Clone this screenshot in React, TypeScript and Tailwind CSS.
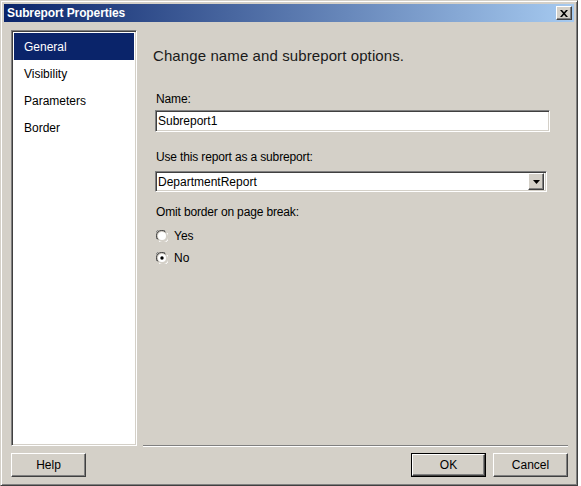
import React from "react";

const raised =
  "border border-t-white border-l-white border-b-[#404040] border-r-[#404040] shadow-[inset_-1px_-1px_0_#808080,inset_1px_1px_0_#d4d0c8]";
const sunken =
  "border border-t-[#808080] border-l-[#808080] border-b-white border-r-white shadow-[inset_1px_1px_0_#404040,inset_-1px_-1px_0_#d4d0c8]";

function Radio({ checked, label }: { checked?: boolean; label: string }) {
  return (
    <div className="flex items-center h-[16px]">
      <svg width="12" height="12" viewBox="0 0 12 12" className="ml-[1px]">
        <path d="M1 9 A5.5 5.5 0 0 1 9 1" fill="none" stroke="#808080" strokeWidth="1" />
        <path d="M2 9.5 A4.5 4.5 0 0 1 9.5 2" fill="none" stroke="#404040" strokeWidth="1" />
        <path d="M3 11 A5.5 5.5 0 0 0 11 3" fill="none" stroke="#ffffff" strokeWidth="1" />
        <circle cx="6" cy="6" r="4" fill="#ffffff" />
        {checked && <circle cx="6" cy="6" r="1.7" fill="#000" />}
      </svg>
      <span className="ml-[6px]">{label}</span>
    </div>
  );
}

export default function App() {
  const ui = { fontFamily: '"Liberation Sans", Arial, sans-serif' };
  return (
    <div className="w-[581px] h-[486px] bg-white relative overflow-hidden" style={ui}>
      <div className="w-[578px] h-[486px] bg-[#d4d0c8] border border-t-[#d4d0c8] border-l-[#d4d0c8] border-b-[#404040] border-r-[#404040] shadow-[inset_1px_1px_0_#ffffff,inset_-1px_-1px_0_#808080] p-[3px] flex flex-col">
        {/* Title bar */}
        <div className="h-[18px] flex items-center bg-[linear-gradient(to_right,#0a246a,#a6caf0)] pl-[3px] pr-[2px]">
          <span className="text-white font-bold text-[12px] leading-none tracking-[-0.1px]">Subreport Properties</span>
          <div className={`ml-auto w-[16px] h-[14px] bg-[#d4d0c8] flex items-center justify-center ${raised}`}>
            <svg width="8" height="7" viewBox="0 0 8 7">
              <path d="M0 0h2l2 2.2L6 0h2L5 3.5 8 7H6L4 4.8 2 7H0l3-3.5z" fill="#000" />
            </svg>
          </div>
        </div>

        {/* Content */}
        <div className="flex mt-[8px] ml-[7px] h-[416px]">
          <div className={`w-[126px] h-[416px] bg-white ${sunken} p-[2px] text-[12px]`}>
            <div className="h-[27px] bg-[#0a246a] text-white flex items-center pl-[10px]">General</div>
            <div className="h-[27px] flex items-center pl-[10px] text-[#000]">Visibility</div>
            <div className="h-[27px] flex items-center pl-[10px] text-[#000]">Parameters</div>
            <div className="h-[27px] flex items-center pl-[10px] text-[#000]">Border</div>
          </div>
          <div className="ml-[6px] w-[425px] h-[416px] border-b border-b-[#808080] shadow-[0_1px_0_#ffffff] flex flex-col">
            <div className="mt-[16px] ml-[10px] text-[15px] leading-[20px] text-[#1a1a1a] tracking-[0.1px]">
              Change name and subreport options.
            </div>
            <div className="ml-[13px] mt-[25px] text-[12px] leading-[16px] text-black tracking-[-0.15px]">Name:</div>
            <div className={`ml-[12px] mt-[3px] w-[395px] h-[22px] bg-white ${sunken} flex items-center pl-[2px] text-[12px]`}>
              Subreport1
            </div>
            <div className="ml-[13px] mt-[17px] text-[12px] leading-[16px] text-black tracking-[-0.15px]">
              Use this report as a subreport:
            </div>
            <div className={`ml-[12px] mt-[6px] w-[392px] h-[21px] bg-white ${sunken} flex items-center pl-[2px] pr-[2px] text-[12px]`}>
              <span>DepartmentReport</span>
              <div className={`ml-auto w-[16px] h-[17px] bg-[#d4d0c8] flex items-center justify-center ${raised}`}>
                <svg width="7" height="4" viewBox="0 0 7 4">
                  <path d="M0 0h7L3.5 4z" fill="#000" />
                </svg>
              </div>
            </div>
            <div className="ml-[13px] mt-[12px] text-[12px] leading-[16px] text-black tracking-[-0.15px]">
              Omit border on page break:
            </div>
            <div className="ml-[12px] mt-[8px] text-[12px]">
              <Radio label="Yes" />
            </div>
            <div className="ml-[12px] mt-[6px] text-[12px]">
              <Radio checked label="No" />
            </div>
          </div>
        </div>

        {/* Footer */}
        <div className="flex items-start mt-[7px] ml-[7px] text-[12px] text-black">
          <div className={`w-[75px] h-[24px] bg-[#d4d0c8] flex items-center justify-center ${raised}`}>Help</div>
          <div className="ml-auto w-[75px] h-[24px] border border-black">
            <div className={`w-full h-full bg-[#d4d0c8] flex items-center justify-center ${raised}`}>OK</div>
          </div>
          <div className={`ml-[7px] mr-[6px] w-[75px] h-[24px] bg-[#d4d0c8] flex items-center justify-center ${raised}`}>
            Cancel
          </div>
        </div>
      </div>
    </div>
  );
}
